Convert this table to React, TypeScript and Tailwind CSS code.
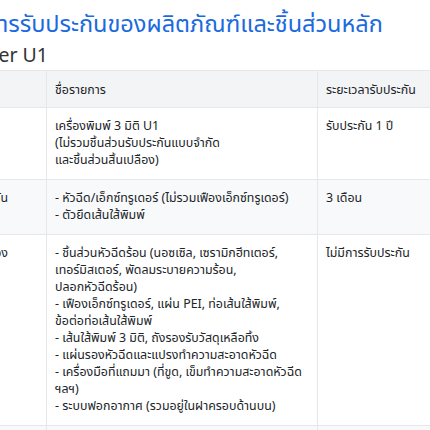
import React from "react";

const rows = [
  {
    c1: "ตัวเครื่อง",
    right: false,
    c2: ["เครื่องพิมพ์ 3 มิติ U1", "(ไม่รวมชิ้นส่วนรับประกันแบบจำกัด", "และชิ้นส่วนสิ้นเปลือง)"],
    c3: "รับประกัน 1 ปี",
    bg: "bg-white",
  },
  {
    c1: "ชิ้นส่วนรับประกัน",
    right: true,
    c2: ["- หัวฉีด/เอ็กซ์ทรูเดอร์ (ไม่รวมเฟืองเอ็กซ์ทรูเดอร์)", "- ตัวยึดเส้นใส้พิมพ์"],
    c3: "3 เดือน",
    bg: "bg-[#f8f9fa]",
  },
  {
    c1: "ชิ้นส่วนสิ้นเปลือง",
    right: true,
    c2: [
      "- ชิ้นส่วนหัวฉีดร้อน (นอซเซิล, เซรามิกฮีทเตอร์,",
      "เทอร์มิสเตอร์, พัดลมระบายความร้อน,",
      "ปลอกหัวฉีดร้อน)",
      "- เฟืองเอ็กซ์ทรูเดอร์, แผ่น PEI, ท่อเส้นใส้พิมพ์,",
      "ข้อต่อท่อเส้นใส้พิมพ์",
      "- เส้นใส้พิมพ์ 3 มิติ, ถังรองรับวัสดุเหลือทิ้ง",
      "- แผ่นรองหัวฉีดและแปรงทำความสะอาดหัวฉีด",
      "- เครื่องมือที่แถมมา (ที่ขูด, เข็มทำความสะอาดหัวฉีด",
      "ฯลฯ)",
      "- ระบบฟอกอากาศ (รวมอยู่ในฝาครอบด้านบน)",
    ],
    c3: "ไม่มีการรับประกัน",
    bg: "bg-white",
  },
];

export default function App() {
  return (
    <div
      className="w-[430px] h-[430px] overflow-hidden bg-white text-[#212529]"
      style={{ fontFamily: '"Noto Sans", "Noto Sans Thai", sans-serif' }}
    >
      <h1 className="-ml-[88px] pt-[3px] whitespace-nowrap text-[23.5px] leading-[40px] text-[#1a6ae0] font-normal">
        นโยบายการรับประกันของผลิตภัณฑ์และชิ้นส่วนหลัก
      </h1>
      <div className="-ml-[76px] mb-[3px] whitespace-nowrap text-[19.5px] leading-[24px] text-[#333]">
        3D Printer U1
      </div>
      <table className="-ml-[114px] table-fixed border-collapse text-[12.4px] leading-[17px] w-[570px]">
        <colgroup>
          <col className="w-[160px]" />
          <col className="w-[271px]" />
          <col />
        </colgroup>
        <thead>
          <tr className="bg-[#f3f4f6]">
            <th className="border border-[#e5e7eb] px-[8px] h-[37px] text-left font-normal whitespace-nowrap">หมวดหมู่</th>
            <th className="border border-[#e5e7eb] px-[8px] text-left font-normal whitespace-nowrap">ชื่อรายการ</th>
            <th className="border border-[#e5e7eb] px-[8px] text-left font-normal whitespace-nowrap">ระยะเวลารับประกัน</th>
          </tr>
        </thead>
        <tbody>
          {rows.map((r, i) => (
            <tr key={i} className={r.bg}>
              <td
                className={
                  r.right
                    ? "border border-[#e5e7eb] pl-[8px] pr-[38px] pt-[9px] pb-[11px] align-top whitespace-nowrap text-right"
                    : "border border-[#e5e7eb] px-[8px] pt-[9px] pb-[11px] align-top whitespace-nowrap text-left"
                }
              >
                {r.c1}
              </td>
              <td className="border border-[#e5e7eb] px-[8px] pt-[9px] pb-[11px] align-top">
                {r.c2.map((l, j) => (
                  <div key={j} className="whitespace-nowrap">{l}</div>
                ))}
              </td>
              <td className="border border-[#e5e7eb] px-[8px] pt-[9px] pb-[11px] align-top whitespace-nowrap">{r.c3}</td>
            </tr>
          ))}
          <tr className="bg-[#f8f9fa]">
            <td className="border border-[#e5e7eb] px-[8px] py-[9px]">&nbsp;</td>
            <td className="border border-[#e5e7eb] px-[8px] py-[9px]">&nbsp;</td>
            <td className="border border-[#e5e7eb] px-[8px] py-[9px]">&nbsp;</td>
          </tr>
        </tbody>
      </table>
    </div>
  );
}
